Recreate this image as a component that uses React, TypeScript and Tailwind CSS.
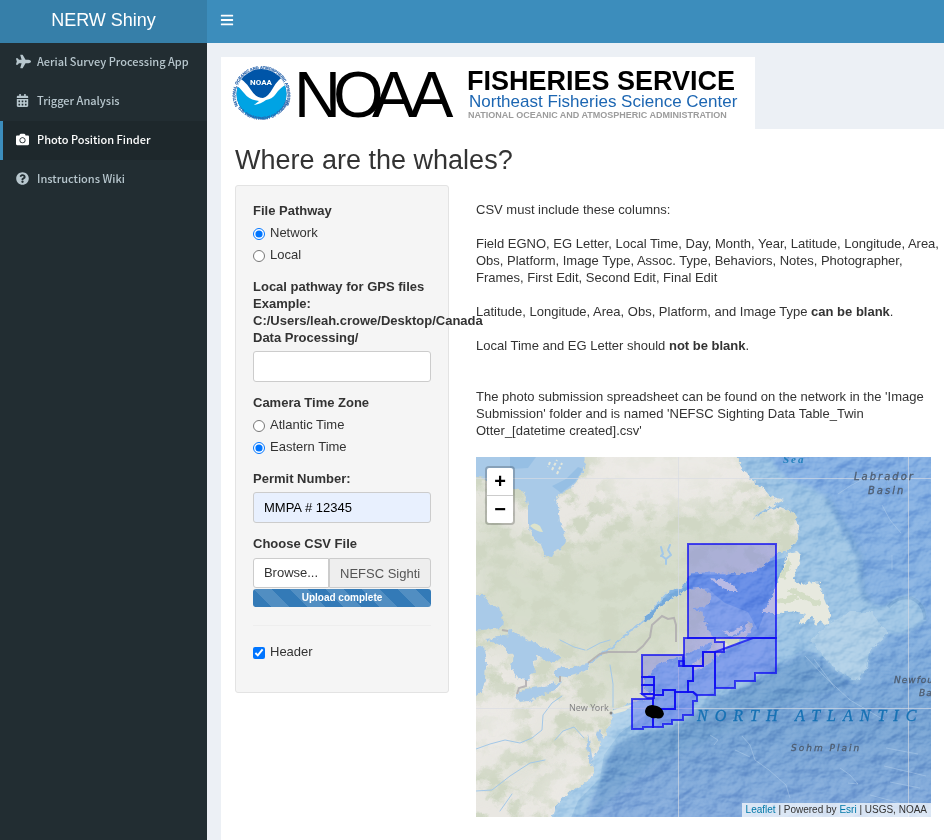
import React from "react";
import { FaBars, FaCalendarAlt, FaCamera, FaPlane, FaQuestionCircle } from "react-icons/fa";

const NAV = [
  { label: "Aerial Survey Processing App", Icon: FaPlane, size: 15, active: false },
  { label: "Trigger Analysis", Icon: FaCalendarAlt, size: 13, active: false },
  { label: "Photo Position Finder", Icon: FaCamera, size: 13, active: true },
  { label: "Instructions Wiki", Icon: FaQuestionCircle, size: 13, active: false },
];

const LAND =
  "M470 450H736L740 465L745 473L755 483L765 490L770 496L784 500L778 503L760 512L752 520L770 509L780 507L788 510L797 517L798 525L799 540L792 546L786 552L778 553L775 556L768 562L757 570L746 573L735 574L718 572L690 573L686 580L682 587L668 592L658 602L650 612L640 623L646 621L655 611L668 601L680 594L690 589L702 588L710 593L712 599L706 606L692 608L702 612L704 620L708 630L716 638L722 636L730 639L738 636L744 630L749 622L753 625L751 632L738 641L724 650L712 660L700 670L694 671L693 664L702 655L710 648L712 643L704 645L694 651L683 656L672 659L660 664L651 671L645 678L644 688L650 695L655 691L657 697L648 700L632 702L622 706L611 711L612 720L608 730L603 740L600 736L601 745L596 753L593 759L594 772L589 780L580 786L568 793L558 802L549 825H470Z";

const REGIONS = [
  "M688 544H776V638H688Z",
  "M715 652L753 638H776V673H755V681H735V688H715Z",
  "M684 638H715V642H724V652H703V666H684Z",
  "M679 661H684V666H679Z",
  "M642 655H683V666H693V681H688V692H675V690H663V695H654V677H642Z",
  "M642 677H654V685H642Z",
  "M642 685H654V694H642Z",
  "M642 694L647 698H654V694Z",
  "M632 699H653V727H643V729H632Z",
  "M654 695H663V690H675V709H653V699Z",
  "M675 692H693L697 696V701H693V715H683V720H672V724H663V727H653V709H675Z",
  "M703 652H715V695H697L693 692H688V681H693V666H703Z",
];

function OceanMap() {
  return (
    <svg viewBox="476 457 455 360" preserveAspectRatio="xMidYMid slice" className="block h-full w-full" role="img" aria-label="Map of survey regions in the northwest Atlantic">
      <defs>
        <linearGradient id="deep" x1="0" y1="0" x2="0" y2="1">
          <stop offset="0" stopColor="#85b0e3" />
          <stop offset="0.45" stopColor="#84b0e0" />
          <stop offset="0.75" stopColor="#76a3d3" />
          <stop offset="1" stopColor="#84abdc" />
        </linearGradient>
        <filter id="coast" filterUnits="userSpaceOnUse" x="470" y="450" width="470" height="375" colorInterpolationFilters="sRGB">
          <feTurbulence type="fractalNoise" baseFrequency="0.18" numOctaves="3" seed="4" result="n" />
          <feDisplacementMap in="SourceGraphic" in2="n" scale="6" xChannelSelector="R" yChannelSelector="G" />
        </filter>
        <filter id="relief" x="0" y="0" width="100%" height="100%" colorInterpolationFilters="sRGB">
          <feTurbulence type="fractalNoise" baseFrequency="0.045 0.06" numOctaves="4" seed="12" result="n" />
          <feDiffuseLighting in="n" surfaceScale="5" lightingColor="#ffffff" diffuseConstant="0.75">
            <feDistantLight azimuth="225" elevation="42" />
          </feDiffuseLighting>
        </filter>
        <filter id="forest" x="0" y="0" width="100%" height="100%" colorInterpolationFilters="sRGB">
          <feTurbulence type="fractalNoise" baseFrequency="0.045 0.06" numOctaves="5" seed="9" />
          <feColorMatrix values="0 0 0 0 0.815  0 0 0 0 0.845  0 0 0 0 0.77  5 0 0 0 -2.2" result="g" />
          <feComposite in="g" in2="SourceGraphic" operator="in" />
        </filter>
        <filter id="soft"><feGaussianBlur stdDeviation="2" /></filter>
        <filter id="wide"><feGaussianBlur stdDeviation="14" /></filter>
        <clipPath id="land"><path d={LAND} /></clipPath>
      </defs>

      <rect x="476" y="457" width="455" height="360" fill="url(#deep)" />
      <path d="M730 457H770L776 467L788 479L812 488L826 497L838 522L850 544L858 558L860 590L868 602L884 606L897 598L912 596L924 608L925 622L905 634L888 634L870 652L866 672L856 683L840 674L822 658L808 650L780 664L750 684L720 697L696 713L670 728L640 736L620 743L606 760L603 782L592 798L586 817H540L600 690Z" fill="#9dc4e4" filter="url(#soft)" />
      <path d="M810 640L828 625L850 612L872 612L880 622L888 634L870 650L865 672L856 681L838 671L822 655Z" fill="#afcfe7" filter="url(#coast)" />
      <path d="M540 825L562 800L585 780L590 755L605 715L640 695L655 700L650 712L620 733L604 755L600 778L578 801L568 825Z" fill="#aed0ea" />
      <path d="M606 760L622 742L645 732L672 726L700 708L740 690L808 652L850 685L800 700L720 735L650 765L610 800L590 817Z" fill="#6d9ecc" opacity="0.55" filter="url(#soft)" />
      <path d="M826 497L843 524L860 557L862 590L870 603" fill="none" stroke="#6b9cc9" strokeWidth="5" opacity="0.5" filter="url(#soft)" />
      <path d="M888 607Q897 596 911 598Q925 604 925 620" fill="none" stroke="#6b9cc9" strokeWidth="3" opacity="0.45" />
      <path d="M686 574L735 575L774 560L788 557L780 585L765 612L758 630L748 612L725 603L715 595L708 588L690 589L668 600L650 616L668 593Z" fill="#7fb0e0" />
      <rect x="476" y="457" width="455" height="360" filter="url(#relief)" className="opacity-50 mix-blend-soft-light" />

      <g filter="url(#coast)">
        <path d={LAND} fill="#e9e7e2" />
        <path d="M789 553L797 551L801 555L798 566L793 578L801 585L812 582L820 583L822 592L826 601L830 612L829 624L824 626L821 620L816 626L813 616L806 622L797 625L806 614L795 611L780 613L762 613L768 604L776 588L782 573L785 560Z" fill="#e7e9df" />
        <path d="M709 578L720 579L732 584L737 590L727 590L716 584Z" fill="#e7e9df" />
        <path d="M722 631L732 632L743 625L738 634L728 636Z" fill="#e7e9df" />
        <g clipPath="url(#land)">
          <path d="M470 490L540 560L600 535L700 510L790 520L770 570L700 630L650 650L610 690L570 660L470 640Z" fill="#cdd7c1" opacity="0.65" filter="url(#wide)" />
          <path d="M470 790L540 750L585 700L615 660L645 635L690 595L720 630L670 690L625 710L590 710L530 780Z" fill="#cdd7c1" opacity="0.55" filter="url(#wide)" />
          <rect x="470" y="450" width="350" height="375" filter="url(#forest)" />
          <path d="M590 440H735L755 480L690 510L600 500Z" fill="#eceae6" opacity="0.85" filter="url(#wide)" />
          <path d="M470 690L530 710L505 750L470 770Z" fill="#eceae6" opacity="0.9" filter="url(#wide)" />
          <path d="M520 800L560 760L595 745L590 780L545 817Z" fill="#eceae6" opacity="0.7" filter="url(#wide)" />
        </g>
      </g>
      <path d="M782 578L790 560M777 602L798 597M790 589L820 605" stroke="#cbd8bc" strokeWidth="5" opacity="0.7" filter="url(#coast)" />

      <g fill="#a9cae8" filter="url(#coast)">
        <path d="M470 450H585L584 472L578 480L572 487L560 494L555 498L558 505L560 522L564 530L565 540L560 552L556 550L552 557L545 556L540 543L530 532L528 525L528 505L525 491L514 489L490 484L485 478L470 476Z" />
        <path d="M470 595H484L489 605L499 608L503 620L502 628L492 629L470 631Z" />
        <path d="M470 650L483 646L486 660L485 680L482 692L470 699Z" />
        <path d="M486 639L506 636L510 629L524 638L538 645L554 651L560 658L552 664L543 659L537 656L533 663L535 670L528 680L518 679L511 668L513 655L502 646Z" />
        <path d="M515 696L525 689L540 687L552 684L562 682L556 689L540 696L529 701L519 702Z" />
        <path d="M553 672L562 667L575 667L590 663L587 669L578 674L566 677L556 676Z" />
        <path d="M588 734L591 750L594 768L590 763L586 742Z" />
        <path d="M596 733L600 741L602 735L599 730Z" />
      </g>
      <path d="M530 526Q534 521 540 526L543 532Q537 532 530 526Z" fill="#dde3cb" />
      <path d="M561 493L575 482L583 469L578 467L566 479L552 486" fill="#8ebbe3" opacity="0.7" />
      <path d="M510 457L536 457L528 468L510 469Z" fill="#8ebbe3" opacity="0.7" />
      <path d="M552 470L557 460M557 474L562 463M550 462L548 467" stroke="#e5e8dc" strokeWidth="2" strokeDasharray="3 2" />
      <g fill="none" stroke="#a3c8e8" strokeWidth="2" strokeLinecap="round" strokeLinejoin="round">
        <path d="M588 665L600 656L613 646L624 636L634 629L643 621" filter="url(#coast)" />
        <path d="M661 547L663 554L661 556M670 545L668 550L671 555L666 559L662 556M666 559V564" />
        <path strokeWidth="1" d="M476 749L490 744L505 740L520 743L532 738L542 730L543 715L552 703L562 696M555 740L563 731L574 727L584 738M476 791L492 790L510 776L530 763L545 760M613 707V684L610 665M500 811L512 794M587 650L600 643L610 640M560 640L574 647L585 650" />
      </g>
      <path d="M645 622L658 606L672 596L690 588" fill="none" stroke="#75a9da" strokeWidth="3" filter="url(#coast)" />
      <g fill="none" stroke="#aeaaae" strokeWidth="2" opacity="0.8">
        <path d="M588 663L600 654L608 652H636L643 646L650 637L652 625L662 616L668 619L674 618L676 625V642" />
        <path d="M517 694L519 688L526 686L526 680M560 682V676M502 630L508 631" />
      </g>
      <path d="M612 711L622 707L634 704L625 711L614 714Z" fill="#e5e8dc" />
      <g fill="none" stroke="#d8dce4" opacity="0.65" strokeWidth="1">
        <path d="M476 478.500H931M476 708.500H931M678.500 457V817M908.500 457V817" />
      </g>

      <g fill="none" stroke="#b9d2ee" opacity="0.45" strokeWidth="1">
        <path d="M710 735L718 740L714 745M742 736L750 745L755 760L769 770L786 785L790 798M735 750L750 757M840 768L850 775L858 784L848 783M886 748L918 754M884 766L926 776M890 782L920 788M870 795L900 803M805 656L824 676L850 700L884 720M814 659L835 688M838 494L850 486L880 470M882 505L890 520L901 533M892 555V570" />
      </g>

      <g fill="#0000ff" fillOpacity="0.2" stroke="#0b08f2" strokeOpacity="0.72" strokeWidth="2">
        {REGIONS.map((d) => <path key={d} d={d} />)}
      </g>
      <path d="M645 711Q646 705 652 705L657 706Q663 708 664 714Q662 720 656 718Q652 719 650 717Q645 716 645 711Z" fill="#000" />

      <g className="font-['Liberation_Serif',serif] text-[16px] tracking-[7px] italic" fill="#1671b4" stroke="#1671b4" strokeWidth="0.3">
        <text x="697" y="721">NORTH</text>
        <text x="795" y="721">ATLANTIC</text>
      </g>
      <text x="783" y="463" className="font-['Liberation_Serif',serif] text-[11px] font-bold italic tracking-[2px]" fill="#2380bd">Sea</text>
      <g className="font-['DejaVu_Sans',sans-serif] text-[9px] italic tracking-[2px]" fill="#4e5d70" stroke="#4e5d70" strokeWidth="0.3">
        <text x="854" y="480" className="text-[10px]">Labrador</text>
        <text x="868" y="494" className="text-[10px]">Basin</text>
        <text x="791" y="751">Sohm Plain</text>
        <text x="894" y="683" className="tracking-[1px]">Newfoundland</text>
        <text x="919" y="696" className="tracking-[1px]">Basin</text>
      </g>
      <text x="569" y="711" className="font-['Noto_Sans',sans-serif] text-[9px]" fill="#858585">New York</text>
      <circle cx="611" cy="713" r="1.500" fill="#858585" />
    </svg>
  );
}

function NoaaBanner() {
  return (
    <svg viewBox="0 0 534 72" className="block h-[72px] w-[534px] max-w-full bg-white" role="img" aria-label="NOAA Fisheries Service, Northeast Fisheries Science Center">
      <defs>
        <path id="sealTop" d="M17 49A26 26 0 1 1 64 49" />
        <path id="sealBottom" d="M13 43A29 29 0 0 0 68 43" />
        <clipPath id="disc"><circle cx="40.500" cy="37" r="25" /></clipPath>
      </defs>
      <g clipPath="url(#disc)">
        <rect x="14" y="10" width="54" height="54" fill="#0055a8" />
        <path d="M14 28L29 39L41 45L53 36L68 24V64H14Z" fill="#00a3e4" />
        <path d="M14 19Q23 22 30 33Q35 41 42 41Q47 40 52 31Q58 20 68 17V27Q60 29 54 38Q51 42 45 43Q40 47 33 48L38 44Q28 43 23 36Q19 30 14 28Z" fill="#fff" />
      </g>
      <text x="40" y="28" textAnchor="middle" className="font-['Roboto',sans-serif] text-[8px] font-bold" fill="#fff">NOAA</text>
      <g className="font-['Liberation_Sans',Arial,sans-serif] text-[4px] font-bold" fill="#2d67ad" stroke="#2d67ad" strokeWidth="0.2">
        <text><textPath href="#sealTop">NATIONAL OCEANIC AND ATMOSPHERIC ADMINISTRATION</textPath></text>
        <text><textPath href="#sealBottom" startOffset="9">U.S. DEPARTMENT OF COMMERCE</textPath></text>
      </g>
      <text x="73 112 151 189" y="60" className="font-['Liberation_Sans',Arial,sans-serif] text-[65px]" fill="#000">NOAA</text>
      <g className="font-['Liberation_Sans',Arial,sans-serif]">
        <text x="246" y="33" className="text-[27px] font-bold" fill="#000">FISHERIES SERVICE</text>
        <text x="248" y="50" className="text-[17px]" fill="#1c66b2">Northeast Fisheries Science Center</text>
        <text x="247" y="61" className="text-[9px] font-bold" fill="#9c9c9c">NATIONAL OCEANIC AND ATMOSPHERIC ADMINISTRATION</text>
      </g>
    </svg>
  );
}

function Radio({ name, label, checked }: { name: string; label: string; checked?: boolean }) {
  return (
    <label className="mt-[5px] flex h-[17px] items-center gap-[5px]">
      <input type="radio" name={name} defaultChecked={checked} className="mt-0.5 size-3 accent-[#0075ff]" />
      {label}
    </label>
  );
}

export default function App() {
  return (
    <div className="flex min-h-screen flex-col bg-[#ecf0f5] font-['Liberation_Sans',Arial,sans-serif] text-[13px] leading-[17px] text-[#333]">
      <header className="flex h-[43px] bg-[#3c8dbc] text-white">
        <div className="flex w-[207px] shrink-0 items-center justify-center bg-[#367fa9] pb-1 text-[18px] leading-6">NERW Shiny</div>
        <button type="button" aria-label="Toggle navigation" className="px-[13px] pb-1"><FaBars size={14} /></button>
      </header>

      <div className="flex flex-1">
        <nav className="w-[207px] shrink-0 bg-[#222d32] font-['Noto_Sans_CJK_SC',sans-serif] text-[11px] font-medium">
          {NAV.map(({ label, Icon, size, active }) => (
            <a
              key={label}
              href="#"
              className={
                active
                  ? "flex h-[39px] items-center gap-1.5 border-l-[3px] border-[#3c8dbc] bg-[#1e282c] pb-0.5 pl-[13px] text-white"
                  : "flex h-[39px] items-center gap-1.5 border-l-[3px] border-transparent pb-0.5 pl-[13px] text-[#b8c7ce]"
              }
            >
              <span className="flex w-[15px]"><Icon size={size} /></span>
              {label}
            </a>
          ))}
        </nav>

        <main className="flex min-w-0 flex-1 flex-col pt-3.5 pl-3.5">
          <NoaaBanner />
          <div className="flex-1 bg-white pl-3.5">
            <h2 className="pt-4 pb-2.5 text-[27px] leading-[30px]">Where are the whales?</h2>
            <div className="grid grid-cols-[214px_minmax(0,1fr)] items-start gap-[27px]">
              <form className="rounded-[3px] border border-[#e3e3e3] bg-[#f5f5f5] px-[17px] pt-4 pb-8">
                <fieldset>
                  <legend className="font-bold">File Pathway</legend>
                  <Radio name="pathway" label="Network" checked />
                  <Radio name="pathway" label="Local" />
                </fieldset>

                <label htmlFor="gps" className="mt-[15px] block font-bold">
                  Local pathway for GPS files<br />Example: C:/Users/leah.crowe/Desktop/Canada Data Processing/
                </label>
                <input id="gps" type="text" className="mt-[5px] block h-[31px] w-full rounded-[3px] border border-[#ccc] bg-white px-2.5" />

                <fieldset className="mt-3">
                  <legend className="font-bold">Camera Time Zone</legend>
                  <Radio name="zone" label="Atlantic Time" />
                  <Radio name="zone" label="Eastern Time" checked />
                </fieldset>

                <label htmlFor="permit" className="mt-[15px] block font-bold">Permit Number:</label>
                <input id="permit" type="text" defaultValue="MMPA # 12345" className="mt-[5px] block h-[31px] w-full rounded-[3px] border border-[#ccc] bg-[#e8f0fe] px-2.5 text-black" />

                <label htmlFor="csv" className="mt-3 block font-bold">Choose CSV File</label>
                <div className="mt-1.5 flex h-[30px]">
                  <button type="button" className="w-[76px] shrink-0 rounded-l-[3px] border border-[#ccc] bg-white pb-0.5">Browse...</button>
                  <input id="csv" type="text" readOnly value="NEFSC Sighting Data.csv" className="min-w-0 flex-1 rounded-r-[3px] border border-[#ccc] bg-[#eee] px-2.5 text-[#555]" />
                </div>
                <div className="mt-px h-[18px] rounded-[3px] bg-[#337ab7] bg-[linear-gradient(45deg,rgba(255,255,255,.15)_25%,transparent_25%,transparent_50%,rgba(255,255,255,.15)_50%,rgba(255,255,255,.15)_75%,transparent_75%)] [background-size:36px_36px] text-center text-[10px] leading-[18px] font-bold text-white">Upload complete</div>

                <hr className="mt-[18px] border-[#eee]" />
                <label className="mt-[17px] flex h-[17px] items-center gap-[5px]">
                  <input type="checkbox" defaultChecked className="mt-0.5 size-3 accent-[#0075ff]" />
                  Header
                </label>
              </form>

              <section className="pt-4">
                <p>CSV must include these columns:</p>
                <p className="mt-[17px]">Field EGNO, EG Letter, Local Time, Day, Month, Year, Latitude, Longitude, Area, Obs, Platform, Image Type, Assoc. Type, Behaviors, Notes, Photographer, Frames, First Edit, Second Edit, Final Edit</p>
                <p className="mt-[17px]">Latitude, Longitude, Area, Obs, Platform, and Image Type <b>can be blank</b>.</p>
                <p className="mt-[17px]">Local Time and EG Letter should <b>not be blank</b>.</p>
                <p className="mt-[34px]">The photo submission spreadsheet can be found on the network in the 'Image Submission' folder and is named 'NEFSC Sighting Data Table_Twin Otter_[datetime created].csv'</p>
                <div className="relative mt-[18px] mr-[13px] h-[360px] overflow-hidden">
                  <OceanMap />
                  <div className="absolute top-[9px] left-[9px] flex w-[30px] flex-col rounded-[4px] border-2 border-black/20 bg-white bg-clip-padding font-['Liberation_Sans',sans-serif] text-[20px] font-bold text-black">
                    <button type="button" aria-label="Zoom in" className="h-7 border-b border-[#ccc]">+</button>
                    <button type="button" aria-label="Zoom out" className="h-[27px]">−</button>
                  </div>
                  <div className="absolute right-0 bottom-0 bg-white/70 px-1 text-[10px] leading-[14px]">
                    <a href="#" className="text-[#0078a8]">Leaflet</a> | Powered by <a href="#" className="text-[#0078a8]">Esri</a> | USGS, NOAA
                  </div>
                </div>
              </section>
            </div>
          </div>
        </main>
      </div>
    </div>
  );
}
